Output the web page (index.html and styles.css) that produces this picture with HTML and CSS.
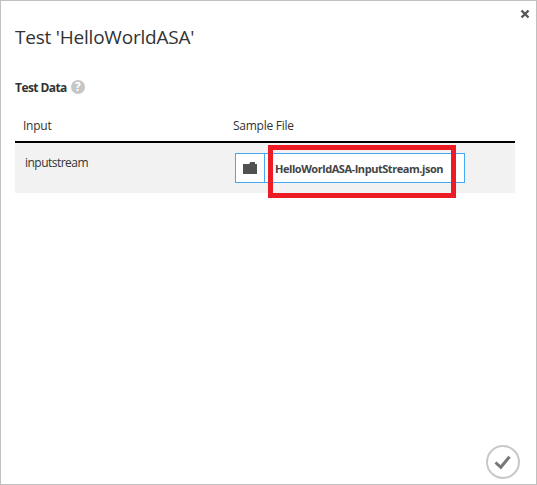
FILE: index.html
```html
<!DOCTYPE html>
<html lang="en">
<head>
<meta charset="utf-8">
<title>Test 'HelloWorldASA'</title>
<link rel="stylesheet" href="styles.css">
</head>
<body>
<main class="dialog">
  <button class="close" aria-label="Close"><svg width="10" height="10" viewBox="0 0 10 10"><path d="M1.5 1.5L8.5 8.5M8.5 1.5L1.5 8.5"/></svg></button>
  <h1 class="title">Test 'HelloWorldASA'</h1>
  <h2 class="section"><span class="section-label">Test Data</span><span class="help">?</span></h2>
  <div class="table">
    <div class="row head"><span>Input</span><span>Sample File</span></div>
    <div class="row data">
      <span class="name">inputstream</span>
      <div class="file">
        <span class="browse"><svg width="14" height="12" viewBox="0 0 14 12"><path d="M0 2H6L7.5 0H12V2H14V12H0Z"/></svg></span>
        <span class="filename">HelloWorldASA-InputStream.json</span>
        <span class="highlight"></span>
      </div>
    </div>
  </div>
  <button class="confirm" aria-label="Confirm"><svg width="34" height="34" viewBox="0 0 34 34"><circle cx="17" cy="17" r="16"/><path d="M9.5 17.5L14.8 22.3L23.5 11.8"/></svg></button>
</main>
</body>
</html>
```
FILE: styles.css
```css
* { box-sizing: border-box; }
body { margin: 0; background: #fff; color: #333; font-family: "Open Sans", "Noto Sans", sans-serif; font-size: 12px; }
button { padding: 0; border: 0; background: none; }
svg { display: block; }
.dialog { display: flex; flex-direction: column; height: 485px; border: 1px solid #c0c0c0; padding: 8px 21px 5px 14px; }
.close { align-self: flex-end; width: 10px; height: 10px; margin-right: -15px; }
.close path { stroke: #555; stroke-width: 2.4; fill: none; }
.title { margin: 4px 0 0; height: 28px; line-height: 28px; font-size: 19px; font-weight: 400; letter-spacing: -0.22px; white-space: nowrap; }
.section { display: flex; align-items: center; gap: 4px; height: 16px; margin: 28px 0 0; font-size: 12px; line-height: 16px; }
.section-label { padding-top: 2px; letter-spacing: -0.57px; }
.help { width: 14px; height: 14px; border-radius: 50%; background: #c6c6c6; color: #fff; font-size: 12px; line-height: 14px; text-align: center; }
.table { width: 500px; margin-top: 18px; }
.row { display: grid; grid-template-columns: 220px 1fr; }
.head { height: 30px; padding: 5px 0 0 8px; grid-template-columns: 210px 1fr; border-bottom: 2px solid #000; line-height: 16px; letter-spacing: -0.25px; }
.data { height: 50px; padding-top: 10px; background: #f2f2f2; }
.name { padding: 1px 0 0 10px; line-height: 17px; letter-spacing: -0.52px; }
.file { position: relative; display: flex; width: 230px; height: 30px; border: 1px solid #44a8f2; background: #fff; }
.browse { width: 29px; padding: 8px 0 0 7px; border-right: 1px solid #44a8f2; }
.browse path { fill: #505050; }
.filename { padding-left: 10px; line-height: 30px; font-size: 11px; font-weight: 700; color: #444; letter-spacing: -0.45px; white-space: nowrap; }
.highlight { position: absolute; left: 32px; top: -9px; width: 188px; height: 53px; border: 5px solid #ed1c24; }
.confirm { width: 34px; height: 34px; margin: auto -5px 0 auto; }
.confirm circle { stroke: #c8c8c8; stroke-width: 2; fill: #fff; }
.confirm path { stroke: #777; stroke-width: 3; fill: none; }
```
